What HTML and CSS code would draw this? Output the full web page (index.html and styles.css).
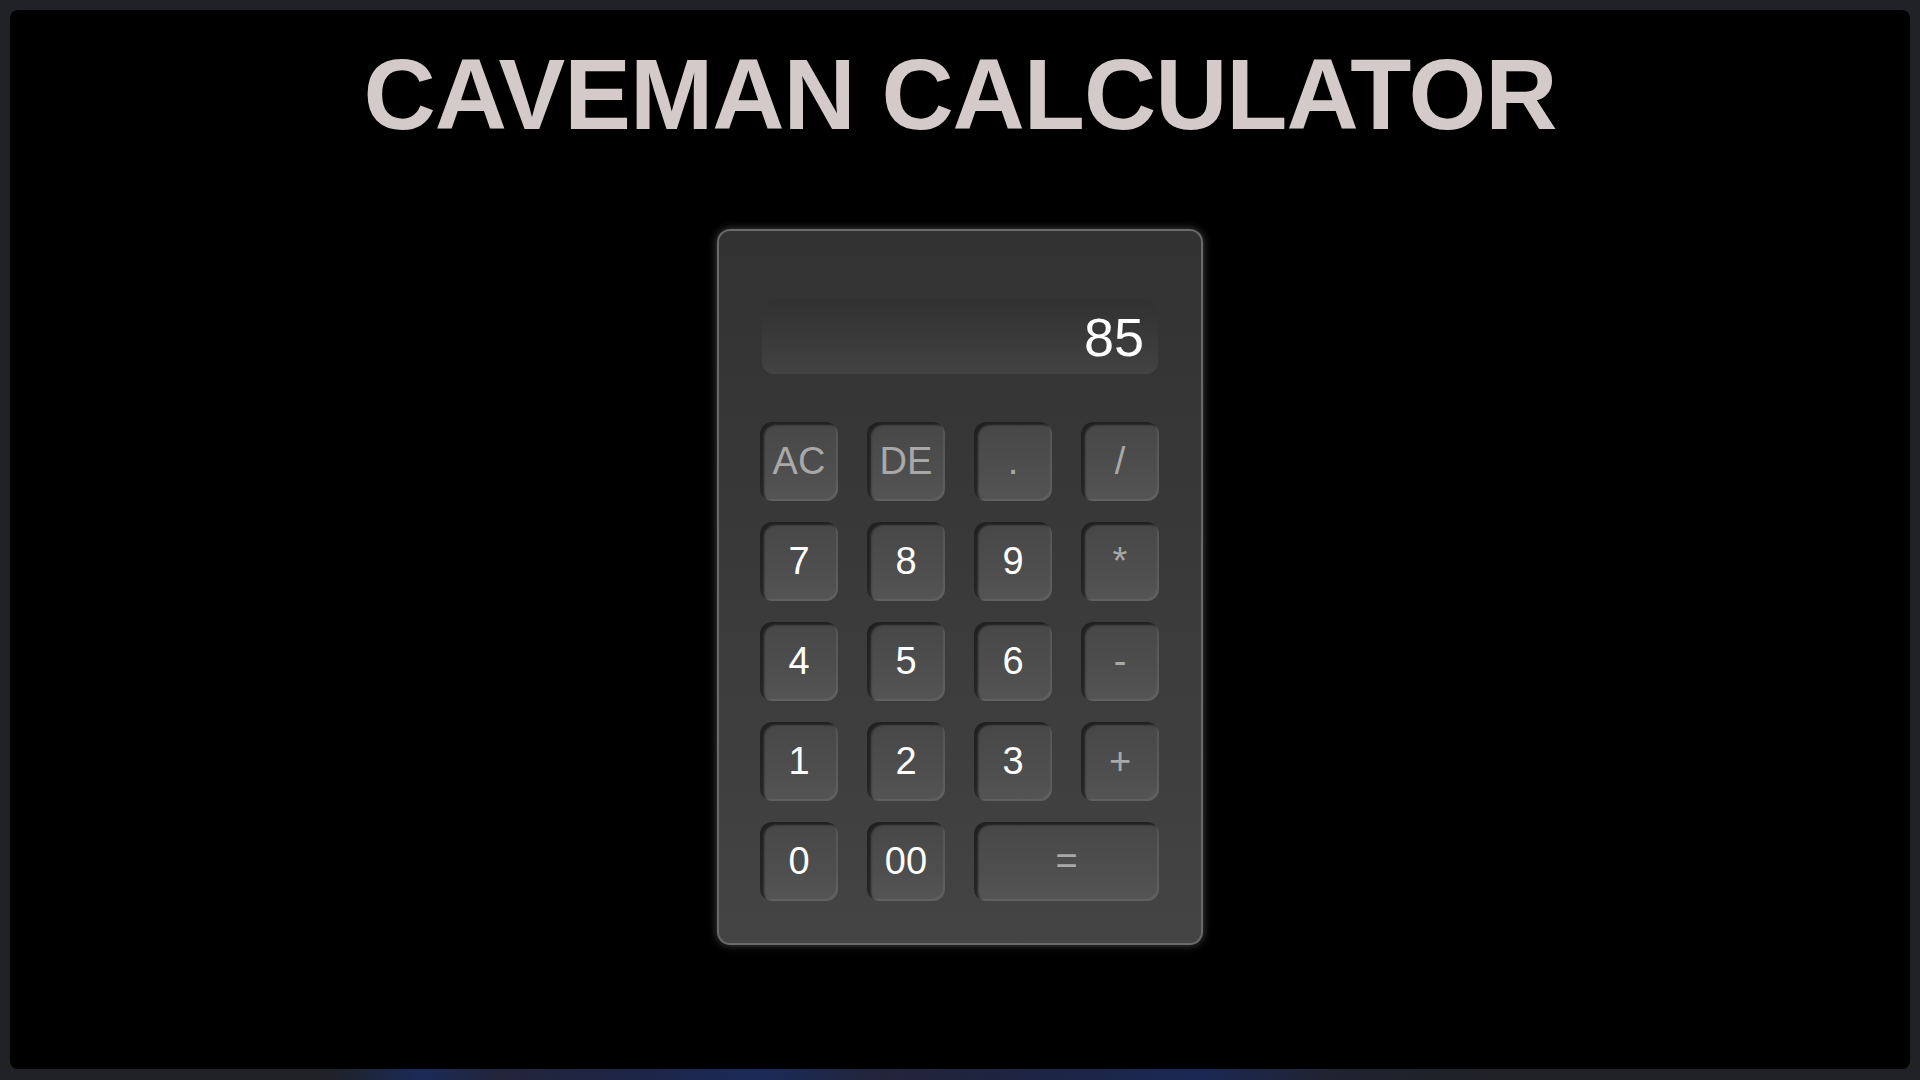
FILE: index.html
```html
<!DOCTYPE html>
<html lang="en">
<head>
<meta charset="utf-8">
<title>Caveman Calculator</title>
<link rel="stylesheet" href="styles.css">
</head>
<body>
<div class="frame">
  <h1 class="title">CAVEMAN CALCULATOR</h1>
  <div class="calc">
    <div class="display">85</div>
    <div class="keys">
      <button class="key op">AC</button>
      <button class="key op">DE</button>
      <button class="key op">.</button>
      <button class="key op">/</button>
      <button class="key">7</button>
      <button class="key">8</button>
      <button class="key">9</button>
      <button class="key op">*</button>
      <button class="key">4</button>
      <button class="key">5</button>
      <button class="key">6</button>
      <button class="key op">-</button>
      <button class="key">1</button>
      <button class="key">2</button>
      <button class="key">3</button>
      <button class="key op">+</button>
      <button class="key">0</button>
      <button class="key">00</button>
      <button class="key op wide">=</button>
    </div>
  </div>
</div>
<div class="dock"></div>
</body>
</html>
```
FILE: styles.css
```css
html, body {
  margin: 0;
  padding: 0;
}
body {
  width: 1920px;
  height: 1080px;
  background: #202226;
  font-family: "Liberation Sans", Arial, sans-serif;
  overflow: hidden;
  display: flex;
  flex-direction: column;
}
.frame {
  margin: 10px 10px 0 10px;
  height: 1059px;
  background: #000;
  border-radius: 8px;
  display: flex;
  flex-direction: column;
  align-items: center;
}
.dock {
  flex: 1;
  background: linear-gradient(90deg,
    #202227 0px, #202228 330px, #1a2a58 420px, #22253a 500px,
    #1e2545 620px, #1a2a58 760px, #22253a 880px, #1e2440 1000px,
    #1a2854 1200px, #202330 1330px, #202227 1500px, #202227 1920px);
}
.title {
  margin: 27px 0 0 0;
  font-size: 100px;
  font-weight: bold;
  line-height: normal;
  color: #d4caca;
  letter-spacing: -1px;
}
.calc {
  box-sizing: border-box;
  margin-top: 77px;
  width: 486px;
  height: 716px;
  padding: 68px 42px 40px 41px;
  border: 2px solid #6a6a6a;
  border-radius: 13px;
  background: linear-gradient(180deg, #323232 0%, #3a3a3a 50%, #444444 100%);
  box-shadow: 0 0 8px rgba(255, 255, 255, 0.28);
}
.display {
  width: 396px;
  margin-left: 2px;
  box-sizing: border-box;
  height: 75px;
  border-radius: 12px;
  background: linear-gradient(180deg, #313131 0%, #3b3b3b 60%, #434343 100%);
  color: #ffffff;
  font-size: 54px;
  line-height: 76px;
  text-align: right;
  padding-right: 14px;
}
.keys {
  margin-top: 48px;
  display: grid;
  grid-template-columns: repeat(4, 78px);
  grid-auto-rows: 79px;
  column-gap: 29px;
  row-gap: 21px;
}
.key {
  font-family: "Liberation Sans", Arial, sans-serif;
  font-size: 38px;
  color: #ffffff;
  border: none;
  padding: 0;
  border-radius: 12px;
  background: linear-gradient(180deg, #474747 0%, #4e4e4e 60%, #545454 100%);
  box-shadow: inset 4px 3px 2px rgba(0, 0, 0, 0.55), inset -2px -2px 1px rgba(255, 255, 255, 0.08);
}
.key.op {
  color: #a8a8a8;
}
.key.wide {
  grid-column: span 2;
}
```
